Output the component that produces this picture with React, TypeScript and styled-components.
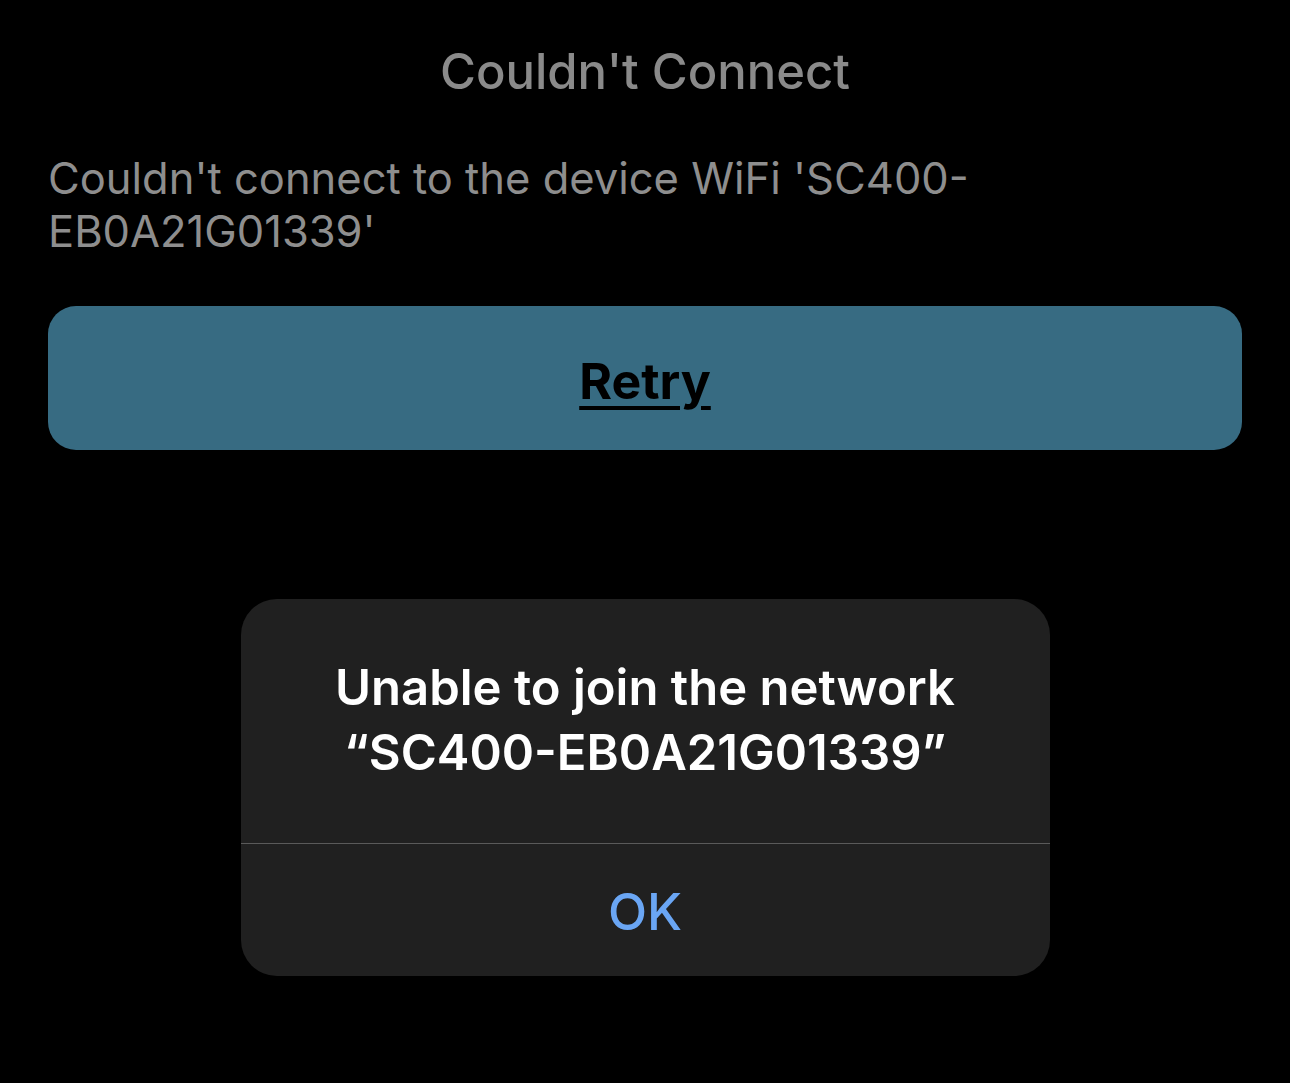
import React from "react";
import styled, { createGlobalStyle } from "styled-components";

const Global = createGlobalStyle`
  html, body { margin: 0; padding: 0; background: #000; }
  body { font-family: Inter, "Liberation Sans", Arial, sans-serif; }
`;

const Page = styled.div`
  width: 1290px;
  height: 1083px;
  background: #000;
  display: flex;
  flex-direction: column;
  box-sizing: border-box;
  padding: 40px 48px 0 48px;
`;

const Title = styled.h1`
  margin: 0;
  text-align: center;
  font-size: 49px;
  line-height: 64px;
  font-weight: 500;
  color: #8a8a8a;
`;

const Message = styled.p`
  margin: 48px 0 0 0;
  font-size: 43.5px;
  line-height: 53px;
  font-weight: 400;
  color: #8e8e8e;
  max-width: 940px;
`;

const RetryButton = styled.button`
  margin-top: 48px;
  height: 144px;
  width: 100%;
  border: none;
  border-radius: 28px;
  background: #376b82;
  font-family: inherit;
  font-size: 50px;
  font-weight: 700;
  color: #000;
  text-decoration: underline;
  text-underline-offset: 7px;
  text-decoration-thickness: 4px;
  cursor: pointer;
  padding-top: 6px;
`;

const Alert = styled.div`
  align-self: center;
  margin-top: 149px;
  width: 809px;
  background: #202020;
  border-radius: 36px;
  display: flex;
  flex-direction: column;
  overflow: hidden;
`;

const AlertTitle = styled.div`
  padding: 56px 30px 58px;
  text-align: center;
  color: #fff;
  font-size: 49px;
  line-height: 65px;
  font-weight: 600;
`;

const Divider = styled.div`
  height: 1px;
  background: #5a5a5a;
`;

const AlertAction = styled.button`
  height: 132px;
  border: none;
  background: transparent;
  color: #6aa6f4;
  font-family: inherit;
  font-size: 51px;
  font-weight: 500;
  cursor: pointer;
  padding-top: 4px;
`;

export default function App() {
  return (
    <>
      <Global />
      <Page>
        <Title>Couldn't Connect</Title>
        <Message>Couldn't connect to the device WiFi 'SC400-EB0A21G01339'</Message>
        <RetryButton>Retry</RetryButton>
        <Alert>
          <AlertTitle>
            Unable to join the network
            <br />
            “SC400-EB0A21G01339”
          </AlertTitle>
          <Divider />
          <AlertAction>OK</AlertAction>
        </Alert>
      </Page>
    </>
  );
}
